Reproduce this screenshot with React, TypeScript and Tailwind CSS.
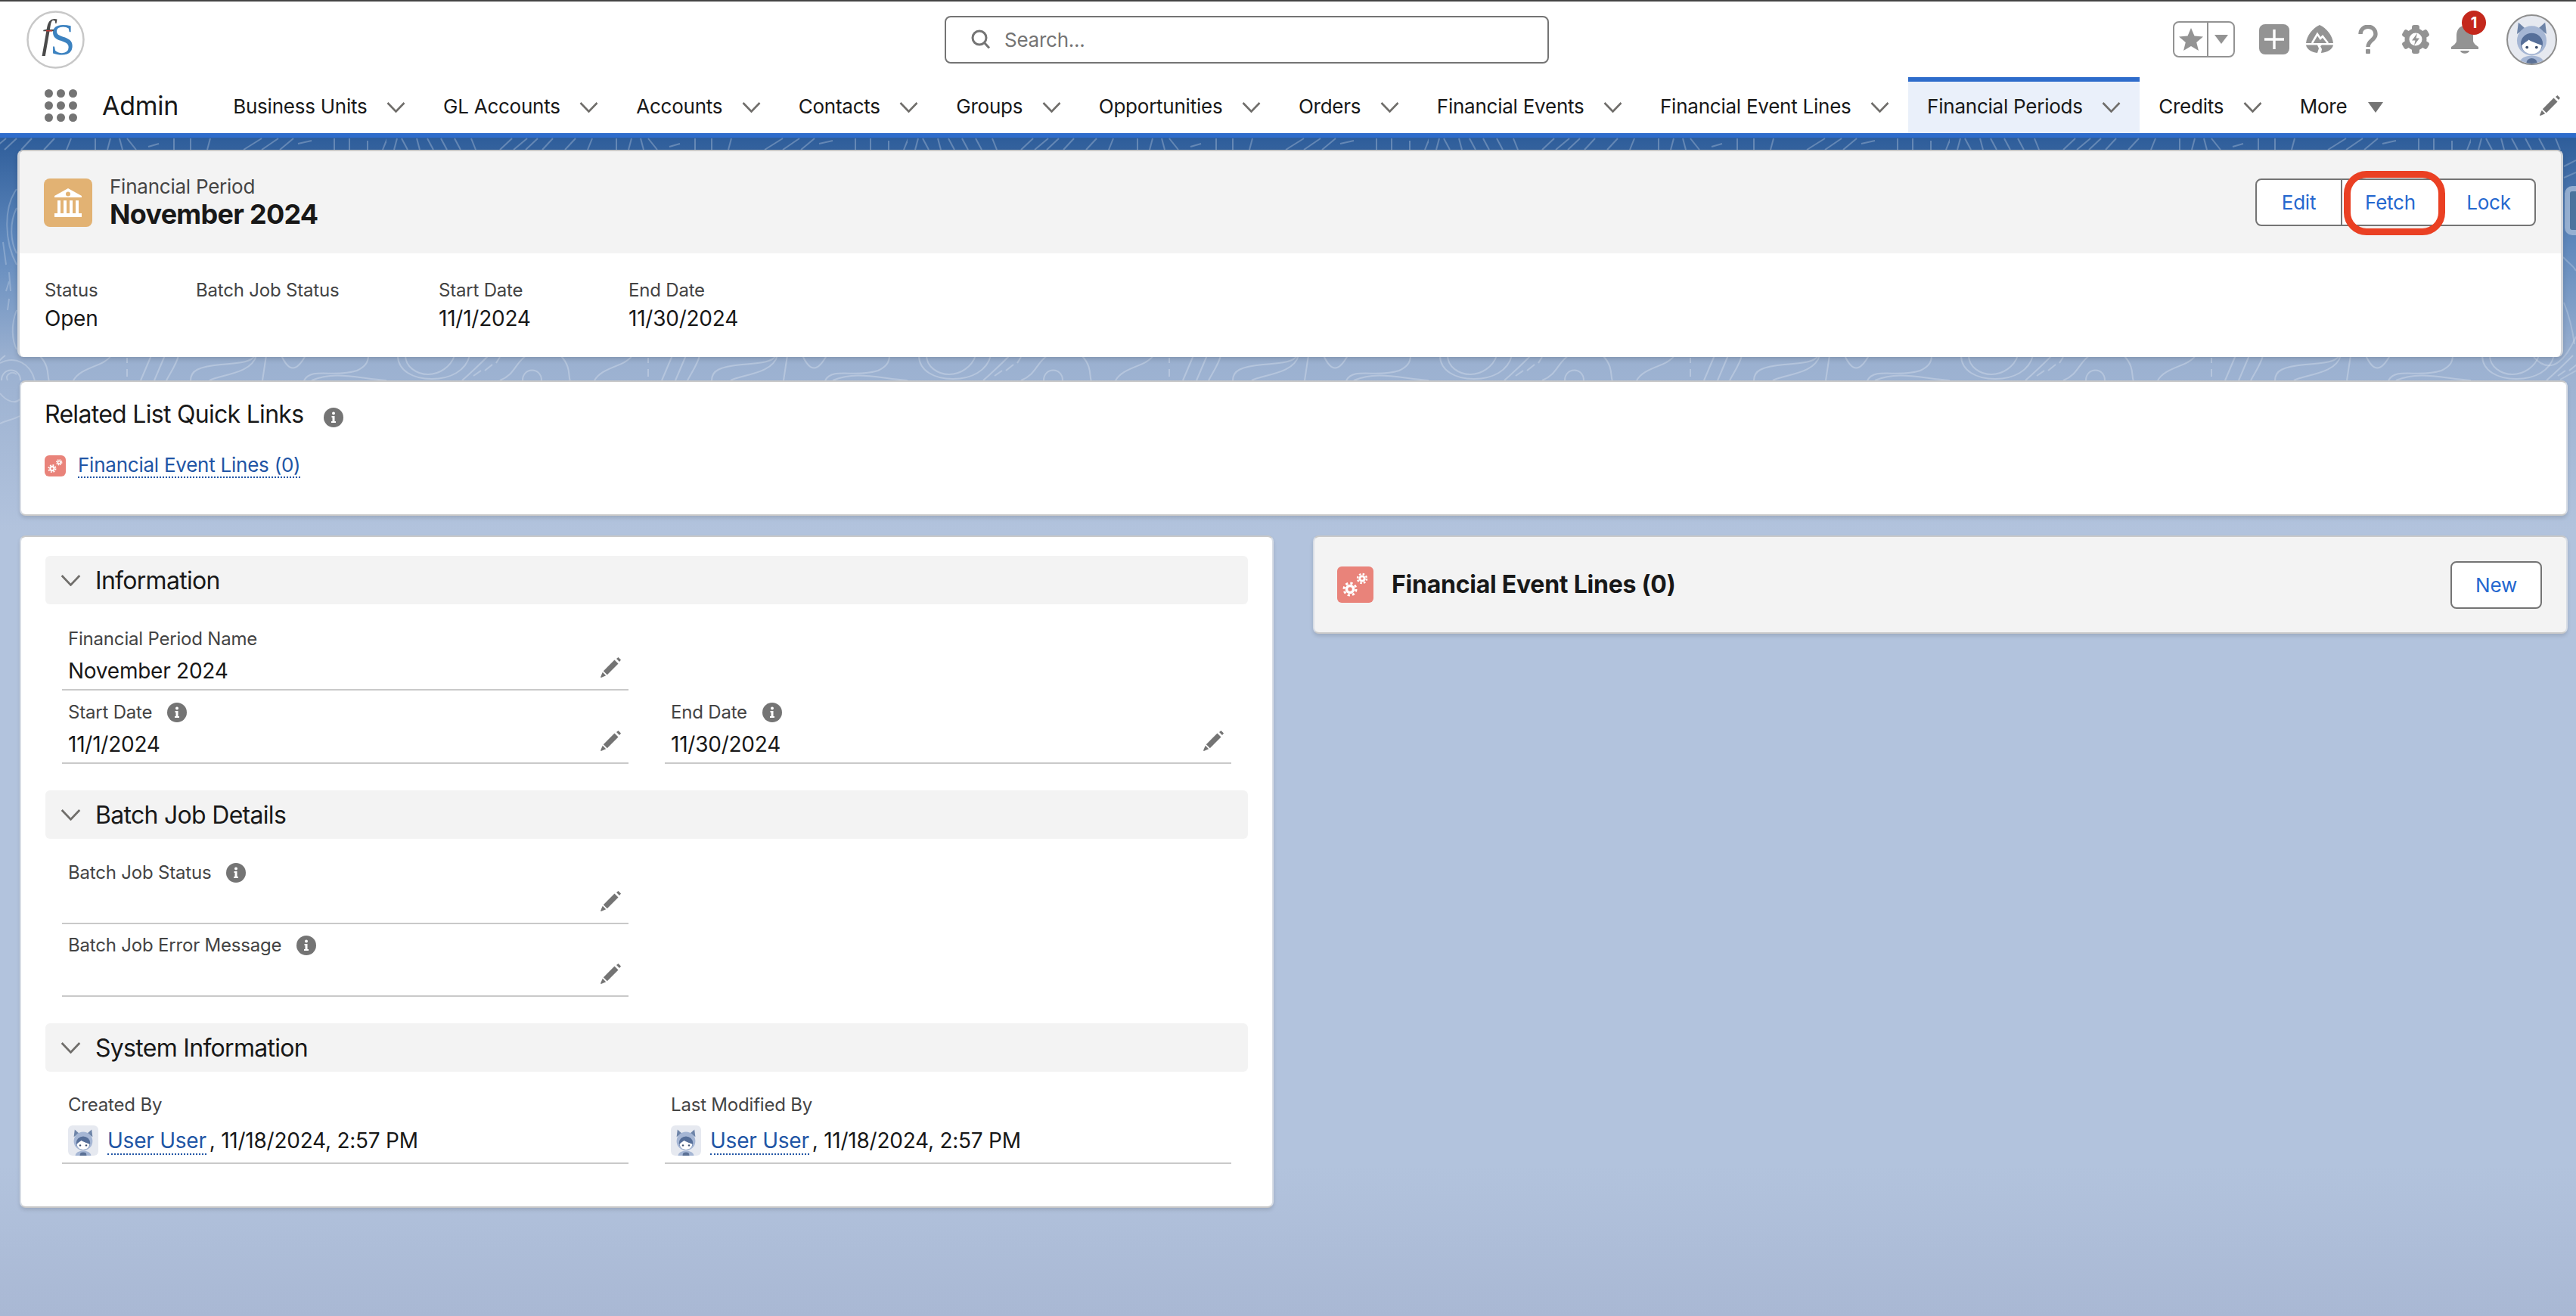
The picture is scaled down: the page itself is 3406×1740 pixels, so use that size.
import type { ReactNode } from 'react';

const TABS = [
  'Business Units',
  'GL Accounts',
  'Accounts',
  'Contacts',
  'Groups',
  'Opportunities',
  'Orders',
  'Financial Events',
  'Financial Event Lines',
  'Financial Periods',
  'Credits',
];

const Chevron = ({ className = 'w-[25px] h-[14px]' }: { className?: string }) => (
  <svg viewBox="0 0 25 14" className={className} fill="none" stroke="#706e6b" strokeWidth="2.6">
    <path d="M1.5 1 12.5 12.5 23.5 1" />
  </svg>
);

const Pencil = ({ className = 'w-[27px] h-[27px]' }: { className?: string }) => (
  <svg viewBox="0 0 27 27" className={className} fill="#747474">
    <path d="M21 2 23.500 0 27 3.500 25 6Z" />
    <path d="M18.500 3.500 23.500 8.500 8.800 23.200 3.800 18.200Z" />
    <path d="M2.800 19.800 7.200 24.200 0.800 27 0 26.200Z" />
  </svg>
);

const Info = () => (
  <svg viewBox="0 0 26 26" className="w-[26px] h-[26px] shrink-0">
    <circle cx="13" cy="13" r="13" fill="#747474" />
    <circle cx="13" cy="7.500" r="2" fill="#fff" />
    <path d="M10.500 11h4v7h1.500v2h-6v-2h1.500v-5h-1Z" fill="#fff" />
  </svg>
);

const Gears = ({ className }: { className: string }) => (
  <div className={`${className} rounded-[6px] bg-[#e9837a] flex items-center justify-center shrink-0`}>
    <svg viewBox="0 0 48 48" className="w-full h-full" fill="none" stroke="#fff">
      <circle cx="17" cy="30" r="4.500" strokeWidth="3.500" />
      <circle cx="17" cy="30" r="8" strokeWidth="3" strokeDasharray="3.200 3.100" />
      <circle cx="33" cy="16" r="3.200" strokeWidth="2.800" />
      <circle cx="33" cy="16" r="6" strokeWidth="2.400" strokeDasharray="2.500 2.200" />
    </svg>
  </div>
);

const Astro = () => (
  <>
    <path d="M22 14 36 26 19 38Z" fill="#6d84a8" />
    <path d="M78 14 64 26 81 38Z" fill="#6d84a8" />
    <ellipse cx="50" cy="52" rx="31" ry="31" fill="#a5b6d4" />
    <path d="M24 100C26 78 74 78 76 100Z" fill="#a5b6d4" />
    <ellipse cx="50" cy="98" rx="11" ry="9" fill="#5b7196" />
    <ellipse cx="50" cy="58" rx="23" ry="22" fill="#566f99" />
    <path d="M29 62C34 56 40 54 44 50 48 54 58 56 71 62 70 74 60 80 50 80 40 80 30 74 29 62Z" fill="#fff" />
    <circle cx="40" cy="66" r="3" fill="#3d4f6d" />
    <circle cx="60" cy="66" r="3" fill="#3d4f6d" />
  </>
);

const SmallAvatar = () => (
  <svg viewBox="0 0 100 100" className="w-[40px] h-[40px] shrink-0 rounded-[6px] bg-[#e6e9f0]">
    <Astro />
  </svg>
);

const Link = ({ children }: { children: ReactNode }) => (
  <span className="text-[#2155a5] border-b-2 border-dotted border-[#2155a5] leading-[30px]">{children}</span>
);

const Card = ({ className, children }: { className: string; children: ReactNode }) => (
  <div className={`rounded-[8px] border-2 border-[#c9c9c9] border-x-[#d8dde5] shadow-[0_3px_5px_rgba(0,0,0,0.12)] shrink-0 ${className}`}>
    {children}
  </div>
);

const Section = ({ title, className = '', children }: { title: string; className?: string; children: ReactNode }) => (
  <section className={className}>
    <div className="h-[64px] bg-[#f3f3f3] rounded-[6px] flex items-center pl-[20px] gap-[19px]">
      <Chevron className="w-[27px] h-[15px]" />
      <h2 className="pt-[2px] text-[32px] tracking-[-0.022em] text-[#181818]">{title}</h2>
    </div>
    <div className="grid grid-cols-2 gap-x-[48px] px-[22px]">{children}</div>
  </section>
);

const Field = ({
  label,
  info,
  value,
  edit = true,
  height,
  valueHeight = 'h-[48px]',
}: {
  label: string;
  info?: boolean;
  value?: ReactNode;
  edit?: boolean;
  height: string;
  valueHeight?: string;
}) => (
  <div className={`${height} flex flex-col justify-end border-b-2 border-[#c9c9c9] px-[8px]`}>
    <div className="h-[32px] mb-[2px] flex items-center gap-[20px] text-[24px] tracking-[-0.008em] text-[#444444]">
      {label}
      {info && <Info />}
    </div>
    <div className={`${valueHeight} flex items-center justify-between text-[28px] text-[#181818] pr-[2px]`}>
      <div className="flex items-center">{value}</div>
      {edit && <Pencil className="w-[27px] h-[27px] mb-[10px]" />}
    </div>
  </div>
);

const Modified = () => (
  <div className="flex items-center">
    <SmallAvatar />
    <span className="ml-[12px]">
      <Link>User User</Link>
    </span>
    <span className="ml-[4px]">, 11/18/2024, 2:57 PM</span>
  </div>
);

const Highlight = ({ label, value, width }: { label: string; value?: string; width: string }) => (
  <div className={width}>
    <div className="h-[36px] flex items-center text-[24px] tracking-[-0.008em] text-[#444444]">{label}</div>
    <div className="h-[37px] flex items-center text-[28px] text-[#181818]">{value}</div>
  </div>
);

const topLines = [
  'M10 198 14 183', 'M28 198 20 183', 'M44 198 40 183', 'M62 198 54 183', 'M80 198 72 183', 'M98 198 90 183', 'M118 198 112 183',
  'M150 198 166 183', 'M168 198 186 183', 'M184 198 200 183', 'M206 198 220 183', 'M236 198 250 183', 'M266 198 272 183',
  'M304 198 304 183', 'M320 198 324 183', 'M340 198 336 183', 'M358 198 346 183', 'M374 194 388 190', 'M408 198 408 183', 'M430 198 430 183', 'M452 198 456 183',
  'M500 198 524 183', 'M524 198 546 183', 'M548 198 566 183', 'M572 190 590 186', 'M620 198 620 183', 'M640 198 640 183', 'M664 198 664 186', 'M684 198 690 183',
];

const stripLines = [
  'M15 470C15 490 35 501 60 501 85 501 105 490 110 470',
  'M25 470C25 485 40 495 55 495 70 495 85 485 90 470',
  'M100 503C115 490 125 480 135 470',
  'M115 497 125 490', 'M130 490 140 482', 'M145 480 150 472',
  'M150 503C170 495 170 480 185 470',
  'M180 503C180 485 205 485 205 503',
  'M230 470C245 485 240 500 243 503',
  'M275 503C285 485 315 485 325 470',
  'M346 473V480', 'M346 488V498',
  'M364 503 378 470', 'M382 503 396 470', 'M398 503C405 490 412 480 414 470',
  'M430 503C430 490 440 485 470 482 490 480 510 480 515 470',
  'M455 503C470 495 510 495 517 470',
  'M530 470 525 503',
  'M550 470C560 492 570 492 582 470',
  'M580 503C590 485 620 500 650 490 660 485 665 480 665 470',
  'M590 503C620 490 650 500 689 503',
];

// contour lines of the page background
const Contours = () => (
  <svg className="absolute left-0 top-[-182px] w-[3406px] h-[1000px]" viewBox="0 0 3406 1000" fill="none">
    <defs>
      <pattern id="contour" x="511" y="0" width="689" height="1000" patternUnits="userSpaceOnUse">
        <g stroke="#ffffff" strokeOpacity="0.25" strokeWidth="2">
          {topLines.map((d, i) => (
            <path key={i} d={d} />
          ))}
          {stripLines.map((d, i) => (
            <path key={i} d={d} />
          ))}
        </g>
      </pattern>
    </defs>
    <rect x="0" y="182" width="3406" height="400" fill="url(#contour)" />
    <g stroke="#ffffff" strokeOpacity="0.22" strokeWidth="2">
      <path d="M22 250C4 275 6 320 22 350" />
      <path d="M22 275C12 295 14 320 22 335" />
      <path d="M4 320 8 350M12 360 14 385M12 395 10 410M8 385 12 372" />
      <path d="M22 410C14 430 16 450 22 462" />
      <path d="M0 480C20 470 40 480 46 503" />
      <path d="M10 503C6 495 16 490 22 495" />
      <path d="M0 520C8 530 20 535 26 528" />
      <path d="M0 560C10 555 18 555 26 550" />
      <path d="M3390 220 3406 212M3390 235 3406 228" />
      <path d="M3389 340C3398 350 3402 350 3406 358" />
      <path d="M3390 400C3398 420 3402 440 3404 455" />
      <path d="M3350 472C3375 500 3395 470 3406 445" />
      <path d="M3385 502 3406 490" />
    </g>
  </svg>
);

const RightIcons = () => (
  <div className="ml-auto mr-[25px] flex items-center">
    <div className="w-[82px] h-[48px] rounded-[8px] border-2 border-[#939393] flex">
      <div className="w-[45px] flex items-center justify-center border-r-2 border-[#939393]">
        <svg viewBox="0 0 32 30" className="w-[32px] h-[30px]" fill="#939393">
          <path d="M16 0 20.500 10.500 32 11.500 23.200 19 26 30 16 24 6 30 8.800 19 0 11.500 11.500 10.500Z" />
        </svg>
      </div>
      <div className="flex-1 flex items-center justify-center">
        <svg viewBox="0 0 18 12" className="w-[18px] h-[12px]" fill="#939393">
          <path d="M0 0H18L9 12Z" />
        </svg>
      </div>
    </div>
    <div className="ml-[32px] w-[40px] h-[40px] rounded-[8px] bg-[#939393] flex items-center justify-center">
      <svg viewBox="0 0 28 28" className="w-[28px] h-[28px]" stroke="#fff" strokeWidth="3.400">
        <path d="M14 1V27M1 14H27" />
      </svg>
    </div>
    <svg viewBox="0 0 38 38" className="ml-[21px] w-[38px] h-[38px]">
      <path d="M19 0C28 4 36 14 37 24H1C2 14 10 4 19 0Z" fill="#939393" />
      <path d="M9 24 16 12 20 18 23 15 30 24" fill="none" stroke="#fff" strokeWidth="2.600" />
      <path d="M1 26.500H16L18 31 16 37C8 36 2 32 1 26.500ZM22 26.500H37C36 32 30 36 21 37L22 32 20 28Z" fill="#939393" />
    </svg>
    <svg viewBox="0 0 26 38" className="ml-[32px] w-[26px] h-[38px]">
      <path d="M3 12C3 -1 23 -1 23 12 23 20 13 20 13 29" fill="none" stroke="#939393" strokeWidth="5.400" />
      <rect x="10" y="32" width="6" height="6" rx="1" fill="#939393" />
    </svg>
    <svg viewBox="0 0 36 38" className="ml-[32px] w-[36px] h-[38px]">
      {[0, 60, 120, 180, 240, 300].map(a => (
        <rect key={a} x="13" y="0" width="10" height="10" rx="3" fill="#939393" transform={`rotate(${a} 18 19)`} />
      ))}
      <circle cx="18" cy="19" r="11.500" fill="#fff" stroke="#939393" strokeWidth="6" />
      <path d="M20 11 13 20.500H17.500L16 27 23 17.500H18.500Z" fill="#939393" />
    </svg>
    <div className="relative ml-[28px] w-[38px] h-[38px]">
      <svg viewBox="0 0 38 38" className="w-[38px] h-[38px]" fill="#939393">
        <path d="M19 1C27 1 30 8 30 14V21C30 24 34 27 37 29V32H1V29C4 27 8 24 8 21V14C8 8 11 1 19 1Z" />
        <path d="M13 34H25C24 39 14 39 13 34Z" />
      </svg>
      <div className="absolute left-[15px] top-[-19px] w-[32px] h-[32px] rounded-full bg-[#c4281c] text-white text-[20px] font-bold flex items-center justify-center">
        1
      </div>
    </div>
    <svg viewBox="0 0 100 100" className="ml-[36px] w-[67px] h-[67px] rounded-full bg-[#e6e9f0] border-2 border-[#8e8e8e]">
      <Astro />
    </svg>
  </div>
);

export default function App() {
  return (
    <div className="w-[3406px] h-[1740px] overflow-hidden flex flex-col bg-white font-[Inter,sans-serif] tracking-[-0.015em]">
      <div className="h-[102px] shrink-0 border-t-2 border-[#444444] flex items-center pl-[35px]">
        <svg viewBox="0 0 77 77" className="w-[77px] h-[77px] shrink-0">
          <circle cx="38.500" cy="38.500" r="37" fill="#fff" stroke="#c8c8c8" strokeWidth="2.500" />
          <text x="31" y="58" fontFamily="Liberation Serif" fontSize="60" fill="#3c82c0">S</text>
          <text x="20" y="49" fontFamily="Liberation Serif" fontStyle="italic" fontSize="52" fill="#4a4a4a">f</text>
          <rect x="26" y="26" width="8" height="1.500" fill="#c23934" />
        </svg>
        <div className="ml-[1137px] w-[799px] h-[63px] rounded-[8px] border-2 border-[#747474] flex items-center pl-[33px] gap-[18px]">
          <svg viewBox="0 0 26 26" className="w-[26px] h-[26px]" fill="none" stroke="#747474" strokeWidth="3">
            <circle cx="11" cy="11" r="9" />
            <path d="M17.500 17.500 24 24.500" />
          </svg>
          <span className="text-[26px] text-[#747474]">Search...</span>
        </div>
        <RightIcons />
      </div>

      <nav className="h-[80px] shrink-0 border-b-[6px] border-[#2e6ccb] flex items-stretch pl-[59px]">
        <div className="self-center grid grid-cols-3 gap-[5px]">
          {Array.from({ length: 9 }).map((_, i) => (
            <span key={i} className="w-[11px] h-[11px] rounded-full bg-[#747474]" />
          ))}
        </div>
        <div className="self-center ml-[33px] text-[34px] text-[#181818]">Admin</div>
        <div className="ml-[47px] flex items-stretch">
          {TABS.map(t => (
            <div
              key={t}
              className={`flex items-center gap-[25.500px] px-[25px] text-[26px] text-[#181818] ${
                t === 'Financial Periods' ? 'bg-[#eaf0fa] border-t-[6px] border-[#2e6ccb]' : 'border-t-[6px] border-transparent'
              }`}
            >
              <span className="mb-[3px]">{t}</span>
              <Chevron />
            </div>
          ))}
          <div className="flex items-center gap-[28px] px-[25px] text-[26px] text-[#181818] border-t-[6px] border-transparent">
            <span className="mb-[3px]">More</span>
            <svg viewBox="0 0 20 14" className="w-[20px] h-[14px]" fill="#747474">
              <path d="M0 0H20L10 14Z" />
            </svg>
          </div>
        </div>
        <Pencil className="self-center ml-auto mr-[21px] w-[27px] h-[27px]" />
      </nav>

      <main className="relative flex-1 overflow-hidden pl-[23px] pt-[16px] bg-[linear-gradient(180deg,#2e5d9a_0,#5f88bc_140px,#9ab0d0_290px,#b2c3dd_520px,#b2c3dd_1360px,#a9b8d4_100%)]">
        <Contours />
        <div className="absolute left-[3391px] top-[64px] w-[30px] h-[65px] rounded-l-[10px] border-[7px] border-[#a6bcd9] bg-[#4a7299] opacity-80" />

        <div className="relative w-[3366px] h-[274px] rounded-[8px] overflow-hidden bg-white border-t-2 border-x-[3px] border-[#d0d4da] border-t-[#c9c9c9] shadow-[0_3px_6px_rgba(0,0,0,0.15)]">
          <div className="h-[135px] bg-[#f3f3f3] flex items-center pl-[32px] pr-[33px]">
            <div className="w-[64px] h-[64px] rounded-[8px] bg-[#e2b273] shrink-0">
              <svg viewBox="0 0 64 64" className="w-[64px] h-[64px]" fill="#fff">
                <path fillRule="evenodd" d="M32 13 50 23V25H14V23ZM32 17.500a3 3 0 1 0 0 6 3 3 0 0 0 0-6Z" />
                <path d="M18 29H22V46H18ZM26 29H30V46H26ZM34 29H38V46H34ZM42 29H46V46H42ZM14 46H50V51H14Z" />
              </svg>
            </div>
            <div className="ml-[23px] flex flex-col">
              <span className="text-[26px] leading-[30px] text-[#444444]">Financial Period</span>
              <span className="text-[36px] leading-[42px] font-bold tracking-[-0.02em] text-[#181818]">November 2024</span>
            </div>
            <div className="relative ml-auto flex h-[63px] rounded-[8px] border-2 border-[#747474] bg-white text-[26px] text-[#2568cf]">
              <div className="w-[111px] flex items-center justify-center">Edit</div>
              <div className="w-[129px] flex items-center justify-center border-l-2 border-[#747474]">Fetch</div>
              <div className="w-[127px] pl-[4px] flex items-center justify-center border-l-2 border-[#747474]">Lock</div>
              <div className="absolute left-[115px] top-[-12px] w-[134px] h-[85px] rounded-[30px] border-[9px] border-[#ea4023]" />
            </div>
          </div>
          <div className="flex pl-[33px] pt-[31px]">
            <Highlight label="Status" value="Open" width="w-[200px]" />
            <Highlight label="Batch Job Status" width="w-[321px]" />
            <Highlight label="Start Date" value="11/1/2024" width="w-[251px]" />
            <Highlight label="End Date" value="11/30/2024" width="w-[251px]" />
          </div>
        </div>

        <Card className="relative ml-[3px] mt-[31px] w-[3369px] h-[179px] bg-white pl-[31px] pt-[23px]">
          <div className="flex items-center gap-[27px] text-[32px] tracking-[-0.022em] text-[#181818] h-[40px]">
            Related List Quick Links
            <div className="mt-[8px]">
              <Info />
            </div>
          </div>
          <div className="mt-[32px] flex items-center gap-[16px] text-[26px]">
            <Gears className="w-[28px] h-[28px]" />
            <Link>Financial Event Lines (0)</Link>
          </div>
        </Card>

        <div className="relative ml-[3px] mt-[26px] flex items-start gap-[52px]">
          <Card className="w-[1658px] h-[889px] bg-white px-[32px] pt-[25px]">
            <Section title="Information">
              <div className="col-span-2">
                <div className="w-[749px]">
                  <Field label="Financial Period Name" value="November 2024" height="h-[114px]" />
                </div>
              </div>
              <Field label="Start Date" info value="11/1/2024" height="h-[97px]" />
              <Field label="End Date" info value="11/30/2024" height="h-[97px]" />
            </Section>
            <Section title="Batch Job Details" className="mt-[35px]">
              <div className="col-span-2">
                <div className="w-[749px]">
                  <Field label="Batch Job Status" info height="h-[113px]" />
                  <Field label="Batch Job Error Message" info height="h-[96px]" />
                </div>
              </div>
            </Section>
            <Section title="System Information" className="mt-[35px]">
              <Field label="Created By" value={<Modified />} edit={false} height="h-[122px]" valueHeight="h-[58px]" />
              <Field label="Last Modified By" value={<Modified />} edit={false} height="h-[122px]" valueHeight="h-[58px]" />
            </Section>
          </Card>

          <Card className="w-[1659px] h-[130px] bg-[#f3f3f3] flex items-center pl-[30px] pr-[32px]">
            <Gears className="w-[48px] h-[48px]" />
            <span className="ml-[24px] text-[32px] font-bold text-[#181818]">Financial Event Lines (0)</span>
            <div className="ml-auto w-[121px] h-[63px] rounded-[8px] border-2 border-[#747474] bg-white flex items-center justify-center text-[26px] text-[#2568cf]">
              New
            </div>
          </Card>
        </div>
      </main>
    </div>
  );
}
